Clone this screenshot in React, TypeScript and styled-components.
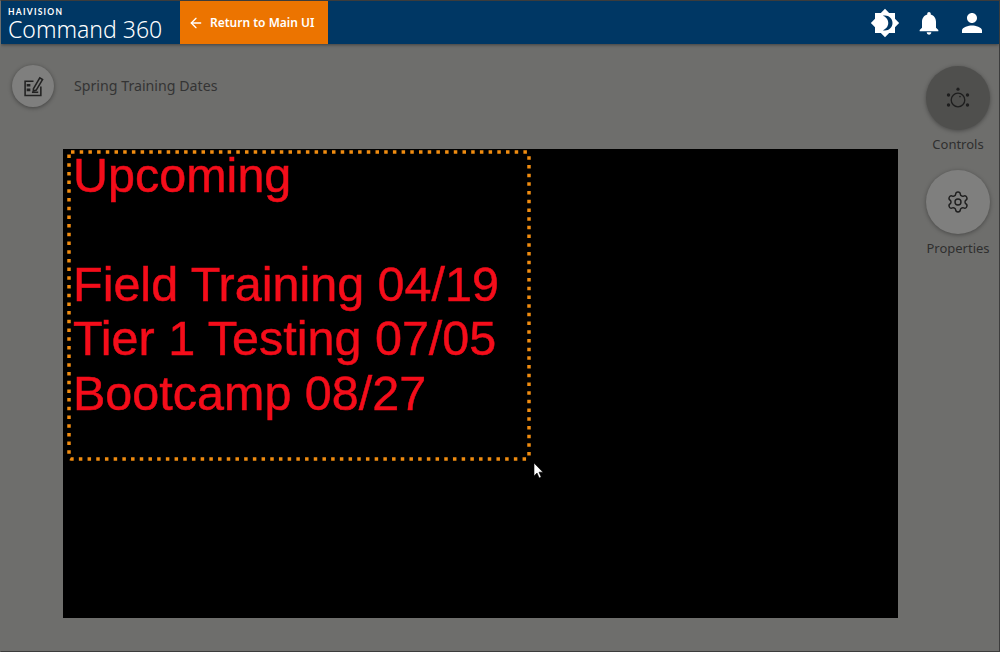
import * as React from 'react'
import styled, { createGlobalStyle } from 'styled-components'
import { MdNotifications, MdPerson } from 'react-icons/md'
import { ArrowLeft, Settings } from 'lucide-react'

const GlobalStyle = createGlobalStyle`
  html, body {
    margin: 0;
    padding: 0;
    background: #6e6e6c;
  }
`

const Frame = styled.div`
  box-sizing: border-box;
  width: 1000px;
  height: 652px;
  display: flex;
  flex-direction: column;
  overflow: hidden;
  background: #6e6e6c;
  border: 1px solid #3c3c3c;
  border-left-color: #6e6e6c;
  font-family: 'Noto Sans', 'Liberation Sans', sans-serif;
`

const Header = styled.header`
  height: 43px;
  flex: none;
  display: flex;
  align-items: stretch;
  background: #003764;
  box-shadow: 0 1px 3px rgba(0, 0, 0, 0.4);
`

const Logo = styled.div`
  width: 179px;
  padding: 6px 0 0 7px;
  box-sizing: border-box;
  color: #fff;
`

const Brand = styled.div`
  font-family: 'Lato', sans-serif;
  font-size: 8.5px;
  line-height: 11px;
  font-weight: 700;
  letter-spacing: 1.25px;
`

const Product = styled.div`
  font-size: 23px;
  line-height: 22px;
  font-weight: 300;
  white-space: nowrap;
`

const ReturnButton = styled.button`
  width: 148px;
  border: 0;
  padding: 0 0 0 8px;
  display: flex;
  align-items: center;
  gap: 6px;
  background: #ec7400;
  color: #fff;
  font-family: inherit;
  font-size: 12px;
  font-weight: 600;
  white-space: nowrap;
`

const HeaderIcons = styled.div`
  margin-left: auto;
  display: flex;
  align-items: center;
  gap: 14px;
  padding-right: 12px;
  color: #fff;
`

const BrightnessSvg = styled.svg`
  margin-right: 1px;
`

const Body = styled.div`
  flex: 1;
  display: flex;
  min-height: 0;
`

const Content = styled.main`
  width: 898px;
  flex: none;
  padding-left: 11px;
  box-sizing: border-box;
`

const TitleRow = styled.div`
  height: 105px;
  display: flex;
  align-items: flex-start;
  gap: 20px;
  padding-top: 21px;
  box-sizing: border-box;
`

const EditButton = styled.div`
  width: 42px;
  height: 42px;
  border-radius: 50%;
  display: flex;
  align-items: center;
  justify-content: center;
  background: #7f7f7e;
  color: #222;
  box-shadow: 0 1px 4px rgba(0, 0, 0, 0.4);
`

const Title = styled.div`
  font-size: 14.2px;
  line-height: 42px;
  color: #343434;
`

const Stage = styled.div`
  display: flow-root;
  position: relative;
  margin-left: 51px;
  width: 835px;
  height: 469px;
  box-sizing: border-box;
  padding: 0 0 0 10px;
  background: #000;
`

const Sign = styled.div`
  margin-top: -1px;
  font-family: 'Liberation Sans', Arial, sans-serif;
  font-size: 48.5px;
  line-height: 54.4px;
  color: #f40d1a;
  white-space: pre;
  -webkit-text-stroke: 0.5px #f40d1a;
`

const Selection = styled.svg`
  position: absolute;
  left: 3px;
  top: 0;
`

const Pointer = styled.svg`
  position: absolute;
  left: 470px;
  top: 313px;
`

const Rail = styled.aside`
  flex: 1;
  display: flex;
  flex-direction: column;
  align-items: center;
  padding: 22px 0 0 18px;
`

const RailItem = styled.div`
  display: flex;
  flex-direction: column;
  align-items: center;
  height: 104px;
`

const RailButton = styled.div<{ $active?: boolean }>`
  width: 64px;
  height: 64px;
  flex: none;
  border-radius: 50%;
  display: flex;
  align-items: center;
  justify-content: center;
  color: #1e1e1e;
  background: ${(p) => (p.$active ? '#4f4f4d' : '#7f7f7e')};
  box-shadow: 0 1px 4px rgba(0, 0, 0, 0.35);
`

const RailLabel = styled.div`
  margin-top: 6px;
  font-size: 13px;
  line-height: 16px;
  color: #2f2f2f;
  white-space: nowrap;
`

const BrightnessIcon = () => (
  <BrightnessSvg width="30" height="30" viewBox="0 0 24 24" fill="#fff">
    <path
      fillRule="evenodd"
      d="M20 8.69V4h-4.69L12 .69 8.69 4H4v4.69L.69 12 4 15.31V20h4.69L12 23.31 15.31 20H20v-4.69L23.31 12 20 8.69zM12 18c-.6 0-1.2-.1-1.7-.25C12.8 16.9 14.6 14.6 14.6 12s-1.8-4.9-4.3-5.75C10.8 6.1 11.4 6 12 6c3.31 0 6 2.69 6 6s-2.69 6-6 6z"
    />
  </BrightnessSvg>
)

const ControlsIcon = () => (
  <svg width="24" height="24" viewBox="0 0 24 24" fill="none" stroke="currentColor" strokeWidth="1.3">
    <circle cx="12" cy="14" r="6.8" />
    <g fill="currentColor" stroke="none">
      <circle cx="12" cy="3.2" r="1.6" />
      <circle cx="2.5" cy="9" r="1.7" />
      <circle cx="21.5" cy="9" r="1.7" />
      <circle cx="2.5" cy="19" r="1.7" />
      <circle cx="21.5" cy="19" r="1.7" />
      <circle cx="14" cy="10.6" r="0.8" />
    </g>
  </svg>
)

const EditIcon = () => (
  <svg width="21" height="21" viewBox="0 0 20 20" fill="none" stroke="currentColor" strokeWidth="1.5">
    <path d="M10 5H2v13.5h15V10" />
    <path d="M3.5 7.5h3.5v2.5H3.5zM3.5 12h3.5v2.5H3.5z" fill="currentColor" stroke="none" />
    <path d="M8.5 15.5h6" />
    <path d="M10 12L16 1.8l2.6 1.6-6 10-2.8 1z" fill="#7f7f7e" />
  </svg>
)

const App = () => {
  return (
    <Frame>
      <GlobalStyle />
      <Header>
        <Logo>
          <Brand>HAIVISION</Brand>
          <Product>Command 360</Product>
        </Logo>
        <ReturnButton>
          <ArrowLeft size={16} strokeWidth={2} />
          Return to Main UI
        </ReturnButton>
        <HeaderIcons>
          <BrightnessIcon />
          <MdNotifications size={28} />
          <MdPerson size={30} />
        </HeaderIcons>
      </Header>
      <Body>
        <Content>
          <TitleRow>
            <EditButton>
              <EditIcon />
            </EditButton>
            <Title>Spring Training Dates</Title>
          </TitleRow>
          <Stage>
            <Sign>{'Upcoming\n\nField Training 04/19\nTier 1 Testing 07/05\nBootcamp 08/27'}</Sign>
            <Selection width="466" height="313" fill="none">
              <rect x="3" y="3" width="460" height="307" rx="2" stroke="#f08c10" strokeWidth="3.5" strokeDasharray="3.5 5.2" />
            </Selection>
            <Pointer width="12" height="18" viewBox="0 0 12 18">
              <path d="M1 1v13l3-3 2.2 5 2-.9-2.2-4.9H10z" fill="#fff" stroke="#000" strokeWidth="0.6" />
            </Pointer>
          </Stage>
        </Content>
        <Rail>
          <RailItem>
            <RailButton $active>
              <ControlsIcon />
            </RailButton>
            <RailLabel>Controls</RailLabel>
          </RailItem>
          <RailItem>
            <RailButton>
              <Settings size={24} strokeWidth={1.4} />
            </RailButton>
            <RailLabel>Properties</RailLabel>
          </RailItem>
        </Rail>
      </Body>
    </Frame>
  )
}

export default App
